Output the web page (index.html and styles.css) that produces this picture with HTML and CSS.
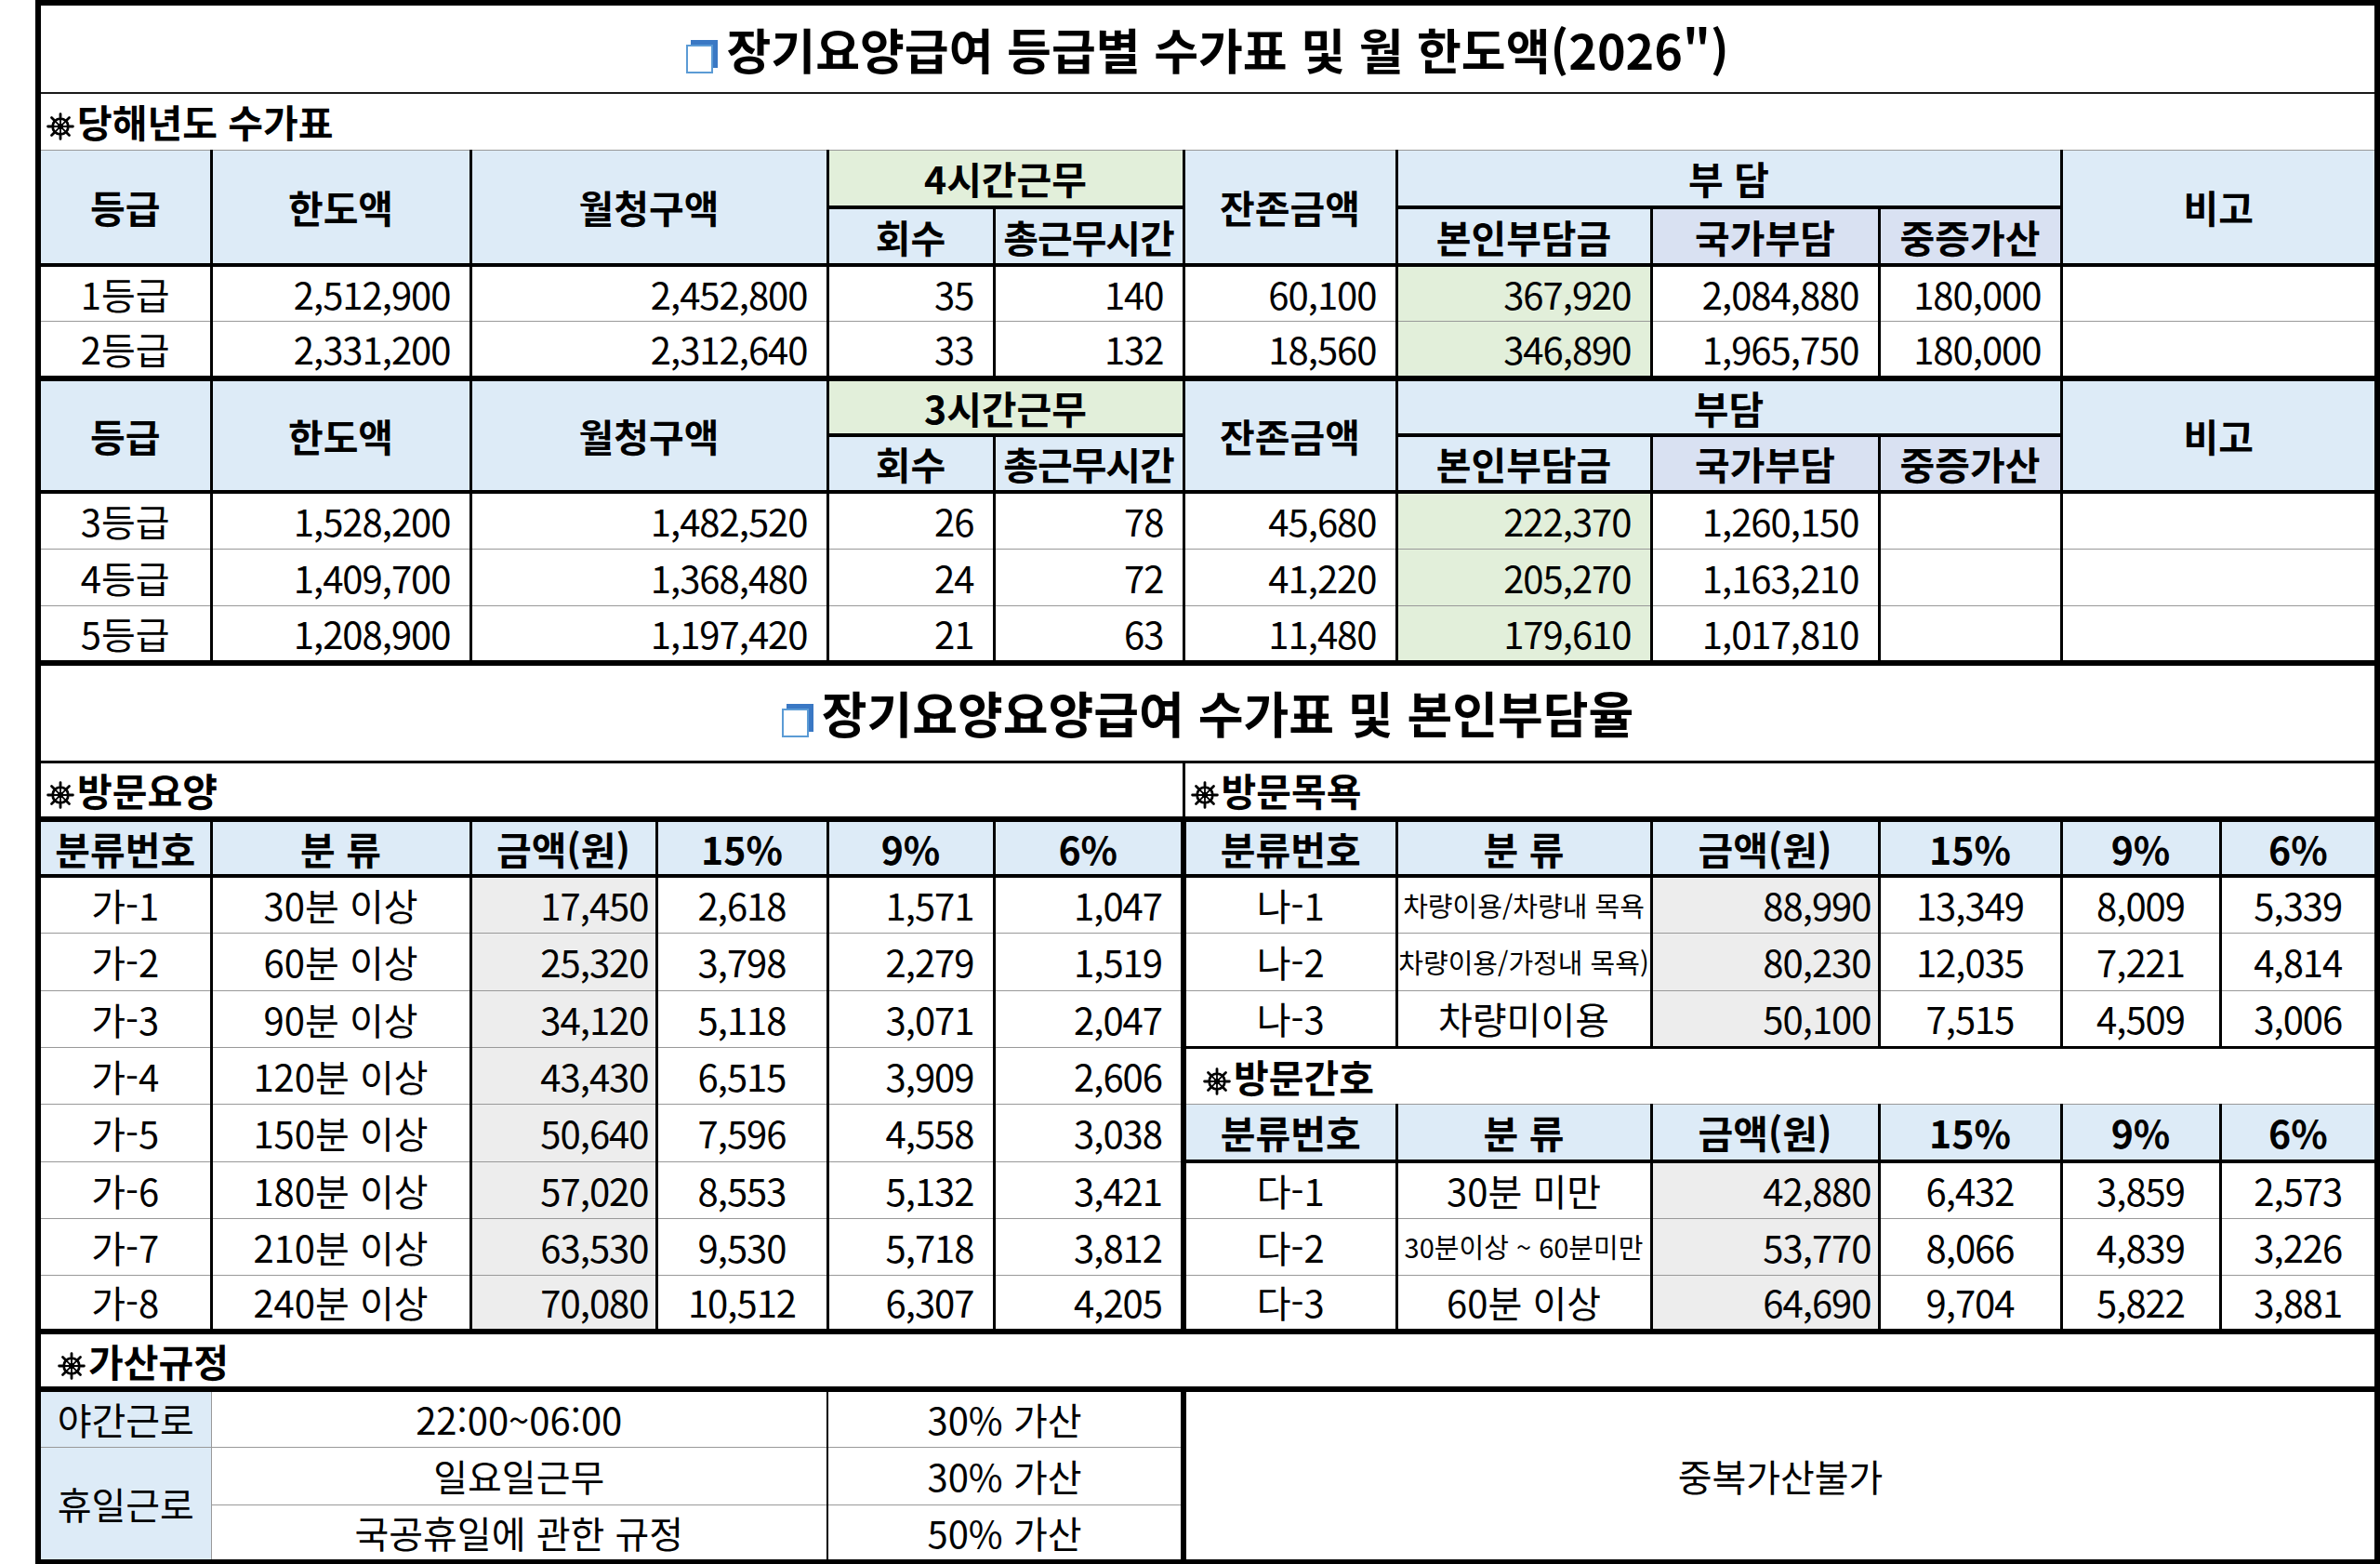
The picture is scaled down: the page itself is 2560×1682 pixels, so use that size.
FILE: index.html
```html
<!DOCTYPE html>
<html lang="ko">
<head>
<meta charset="utf-8">
<title>장기요양급여 수가표</title>
<link rel="stylesheet" href="styles.css">
</head>
<body>
<table class="sheet">
<colgroup>
<col class="w-a"><col class="w-b"><col class="w-c1"><col class="w-c2"><col class="w-d"><col class="w-e"><col class="w-f"><col class="w-g"><col class="w-h"><col class="w-i"><col class="w-j1"><col class="w-j2">
</colgroup>
<tbody>
<tr class="row-title">
<td colspan="12" class="title"><svg class="ticon" viewBox="0 0 34 36"><rect x="5" y="0" width="29" height="30" fill="#3A78C4"/><rect x="1" y="6" width="27" height="29" fill="#fff" stroke="#5B9BD5" stroke-width="2"/></svg>장기요양급여 등급별 수가표 및 월 한도액(2026")</td>
</tr>
<tr class="row-61">
<td colspan="12" class="sec"><svg class="wheel" viewBox="0 0 30 30"><g stroke="#000" fill="none"><circle cx="15" cy="15" r="8.4" stroke-width="2.8"/><path d="M15 4V26M4 15H26M7.2 7.2L22.8 22.8M22.8 7.2L7.2 22.8" stroke-width="1.8"/><path d="M15 1.6V5M15 25V28.4M1.6 15H5M25 15H28.4M5.5 5.5L8 8M22 22L24.5 24.5M24.5 5.5L22 8M8 22L5.5 24.5" stroke-width="2.8" stroke-linecap="round"/></g><circle cx="15" cy="15" r="3.2"/></svg>당해년도 수가표</td>
</tr>
<tr class="row-62">
<td rowspan="2" class="hd">등급</td>
<td rowspan="2" class="hd">한도액</td>
<td rowspan="2" colspan="2" class="hd">월청구액</td>
<td colspan="2" class="hd green">4시간근무</td>
<td rowspan="2" class="hd">잔존금액</td>
<td colspan="3" class="hd">부 담</td>
<td rowspan="2" colspan="2" class="hd">비고</td>
</tr>
<tr class="row-62">
<td class="hd">회수</td>
<td class="hd tight">총근무시간</td>
<td class="hd">본인부담금</td>
<td class="hd lav">국가부담</td>
<td class="hd lav">중증가산</td>
</tr>
<tr class="row-60">
<td class="c">1등급</td><td class="n">2,512,900</td><td colspan="2" class="n">2,452,800</td><td class="n">35</td><td class="n">140</td><td class="n">60,100</td><td class="n green">367,920</td><td class="n">2,084,880</td><td class="n">180,000</td><td colspan="2"></td>
</tr>
<tr class="row-62 tb">
<td class="c">2등급</td><td class="n">2,331,200</td><td colspan="2" class="n">2,312,640</td><td class="n">33</td><td class="n">132</td><td class="n">18,560</td><td class="n green">346,890</td><td class="n">1,965,750</td><td class="n">180,000</td><td colspan="2"></td>
</tr>
<tr class="row-61">
<td rowspan="2" class="hd">등급</td>
<td rowspan="2" class="hd">한도액</td>
<td rowspan="2" colspan="2" class="hd">월청구액</td>
<td colspan="2" class="hd green">3시간근무</td>
<td rowspan="2" class="hd">잔존금액</td>
<td colspan="3" class="hd">부담</td>
<td rowspan="2" colspan="2" class="hd">비고</td>
</tr>
<tr class="row-61">
<td class="hd">회수</td>
<td class="hd tight">총근무시간</td>
<td class="hd">본인부담금</td>
<td class="hd lav">국가부담</td>
<td class="hd lav">중증가산</td>
</tr>
<tr class="row-61">
<td class="c">3등급</td><td class="n">1,528,200</td><td colspan="2" class="n">1,482,520</td><td class="n">26</td><td class="n">78</td><td class="n">45,680</td><td class="n green">222,370</td><td class="n">1,260,150</td><td class="n"></td><td colspan="2"></td>
</tr>
<tr class="row-61">
<td class="c">4등급</td><td class="n">1,409,700</td><td colspan="2" class="n">1,368,480</td><td class="n">24</td><td class="n">72</td><td class="n">41,220</td><td class="n green">205,270</td><td class="n">1,163,210</td><td class="n"></td><td colspan="2"></td>
</tr>
<tr class="row-62 tb">
<td class="c">5등급</td><td class="n">1,208,900</td><td colspan="2" class="n">1,197,420</td><td class="n">21</td><td class="n">63</td><td class="n">11,480</td><td class="n green">179,610</td><td class="n">1,017,810</td><td class="n"></td><td colspan="2"></td>
</tr>
<tr class="row-title2">
<td colspan="12" class="title title2"><svg class="ticon" viewBox="0 0 34 36"><rect x="5" y="0" width="29" height="30" fill="#3A78C4"/><rect x="1" y="6" width="27" height="29" fill="#fff" stroke="#5B9BD5" stroke-width="2"/></svg>장기요양요양급여 수가표 및 본인부담율</td>
</tr>
<tr class="row-62 tb">
<td colspan="6" class="sec"><svg class="wheel" viewBox="0 0 30 30"><g stroke="#000" fill="none"><circle cx="15" cy="15" r="8.4" stroke-width="2.8"/><path d="M15 4V26M4 15H26M7.2 7.2L22.8 22.8M22.8 7.2L7.2 22.8" stroke-width="1.8"/><path d="M15 1.6V5M15 25V28.4M1.6 15H5M25 15H28.4M5.5 5.5L8 8M22 22L24.5 24.5M24.5 5.5L22 8M8 22L5.5 24.5" stroke-width="2.8" stroke-linecap="round"/></g><circle cx="15" cy="15" r="3.2"/></svg>방문요양</td>
<td colspan="6" class="sec"><svg class="wheel" viewBox="0 0 30 30"><g stroke="#000" fill="none"><circle cx="15" cy="15" r="8.4" stroke-width="2.8"/><path d="M15 4V26M4 15H26M7.2 7.2L22.8 22.8M22.8 7.2L7.2 22.8" stroke-width="1.8"/><path d="M15 1.6V5M15 25V28.4M1.6 15H5M25 15H28.4M5.5 5.5L8 8M22 22L24.5 24.5M24.5 5.5L22 8M8 22L5.5 24.5" stroke-width="2.8" stroke-linecap="round"/></g><circle cx="15" cy="15" r="3.2"/></svg>방문목욕</td>
</tr>
<tr class="row-61">
<td class="hd">분류번호</td><td class="hd">분 류</td><td class="hd">금액(원)</td><td class="hd">15%</td><td class="hd">9%</td><td class="hd mid-r">6%</td>
<td class="hd mid-l">분류번호</td><td class="hd">분 류</td><td class="hd">금액(원)</td><td class="hd">15%</td><td class="hd">9%</td><td class="hd">6%</td>
</tr>
<tr class="row-61">
<td class="c">가-1</td><td class="c">30분 이상</td><td class="amt">17,450</td><td class="c num">2,618</td><td class="n">1,571</td><td class="n mid-r">1,047</td>
<td class="c mid-l">나-1</td><td class="c small">차량이용/차량내 목욕</td><td class="amt">88,990</td><td class="c num">13,349</td><td class="c num">8,009</td><td class="c num">5,339</td>
</tr>
<tr class="row-62">
<td class="c">가-2</td><td class="c">60분 이상</td><td class="amt">25,320</td><td class="c num">3,798</td><td class="n">2,279</td><td class="n mid-r">1,519</td>
<td class="c mid-l">나-2</td><td class="c small">차량이용/가정내 목욕)</td><td class="amt">80,230</td><td class="c num">12,035</td><td class="c num">7,221</td><td class="c num">4,814</td>
</tr>
<tr class="row-61">
<td class="c">가-3</td><td class="c">90분 이상</td><td class="amt">34,120</td><td class="c num">5,118</td><td class="n">3,071</td><td class="n mid-r">2,047</td>
<td class="c mid-l bk">나-3</td><td class="c bk">차량미이용</td><td class="amt bk">50,100</td><td class="c num bk">7,515</td><td class="c num bk">4,509</td><td class="c num bk">3,006</td>
</tr>
<tr class="row-61">
<td class="c">가-4</td><td class="c">120분 이상</td><td class="amt">43,430</td><td class="c num">6,515</td><td class="n">3,909</td><td class="n mid-r">2,606</td>
<td colspan="6" class="sec mid-l indent"><svg class="wheel" viewBox="0 0 30 30"><g stroke="#000" fill="none"><circle cx="15" cy="15" r="8.4" stroke-width="2.8"/><path d="M15 4V26M4 15H26M7.2 7.2L22.8 22.8M22.8 7.2L7.2 22.8" stroke-width="1.8"/><path d="M15 1.6V5M15 25V28.4M1.6 15H5M25 15H28.4M5.5 5.5L8 8M22 22L24.5 24.5M24.5 5.5L22 8M8 22L5.5 24.5" stroke-width="2.8" stroke-linecap="round"/></g><circle cx="15" cy="15" r="3.2"/></svg>방문간호</td>
</tr>
<tr class="row-62">
<td class="c">가-5</td><td class="c">150분 이상</td><td class="amt">50,640</td><td class="c num">7,596</td><td class="n">4,558</td><td class="n mid-r">3,038</td>
<td class="hd mid-l">분류번호</td><td class="hd">분 류</td><td class="hd">금액(원)</td><td class="hd">15%</td><td class="hd">9%</td><td class="hd">6%</td>
</tr>
<tr class="row-61">
<td class="c">가-6</td><td class="c">180분 이상</td><td class="amt">57,020</td><td class="c num">8,553</td><td class="n">5,132</td><td class="n mid-r">3,421</td>
<td class="c mid-l">다-1</td><td class="c">30분 미만</td><td class="amt">42,880</td><td class="c num">6,432</td><td class="c num">3,859</td><td class="c num">2,573</td>
</tr>
<tr class="row-61">
<td class="c">가-7</td><td class="c">210분 이상</td><td class="amt">63,530</td><td class="c num">9,530</td><td class="n">5,718</td><td class="n mid-r">3,812</td>
<td class="c mid-l">다-2</td><td class="c small">30분이상 ~ 60분미만</td><td class="amt">53,770</td><td class="c num">8,066</td><td class="c num">4,839</td><td class="c num">3,226</td>
</tr>
<tr class="row-61 tb">
<td class="c">가-8</td><td class="c">240분 이상</td><td class="amt">70,080</td><td class="c num">10,512</td><td class="n">6,307</td><td class="n mid-r">4,205</td>
<td class="c mid-l">다-3</td><td class="c">60분 이상</td><td class="amt">64,690</td><td class="c num">9,704</td><td class="c num">5,822</td><td class="c num">3,881</td>
</tr>
<tr class="row-62 tb">
<td colspan="12" class="sec indent"><svg class="wheel" viewBox="0 0 30 30"><g stroke="#000" fill="none"><circle cx="15" cy="15" r="8.4" stroke-width="2.8"/><path d="M15 4V26M4 15H26M7.2 7.2L22.8 22.8M22.8 7.2L7.2 22.8" stroke-width="1.8"/><path d="M15 1.6V5M15 25V28.4M1.6 15H5M25 15H28.4M5.5 5.5L8 8M22 22L24.5 24.5M24.5 5.5L22 8M8 22L5.5 24.5" stroke-width="2.8" stroke-linecap="round"/></g><circle cx="15" cy="15" r="3.2"/></svg>가산규정</td>
</tr>
<tr class="row-62">
<td class="c blue gr">야간근로</td><td colspan="3" class="c gl br2">22:00~06:00</td><td colspan="2" class="c bl2 mid-r">30% 가산</td>
<td colspan="6" rowspan="3" class="c mid-l">중복가산불가</td>
</tr>
<tr class="row-62">
<td rowspan="2" class="c blue gr">휴일근로</td><td colspan="3" class="c gl br2">일요일근무</td><td colspan="2" class="c bl2 mid-r">30% 가산</td>
</tr>
<tr class="row-62">
<td colspan="3" class="c gl br2">국공휴일에 관한 규정</td><td colspan="2" class="c bl2 mid-r">50% 가산</td>
</tr>
</tbody>
</table>
</body>
</html>
```

FILE: styles.css
```css
html, body {
  margin: 0;
  padding: 0;
  background: #fff;
}

body {
  font-family: "Noto Sans CJK KR", "Noto Sans", sans-serif;
  color: #000;
}

.sheet {
  border-collapse: collapse;
  table-layout: fixed;
  width: 2521px;
  margin: 0 0 0 38px;
  border: 6px solid #000;
}

.w-a { width: 186px; }
.w-b { width: 279px; }
.w-c1 { width: 200px; }
.w-c2 { width: 184px; }
.w-d { width: 179px; }
.w-e { width: 204px; }
.w-f { width: 229px; }
.w-g { width: 274px; }
.w-h { width: 245px; }
.w-i { width: 196px; }
.w-j1 { width: 171px; }
.w-j2 { width: 169px; }

.row-title { height: 97px; }
.row-title2 { height: 106px; }
.row-60 { height: 60px; }
.row-61 { height: 61px; }
.row-62 { height: 62px; }

.sheet td {
  border-left: 3px solid #000;
  border-right: 3px solid #000;
  border-top: 1px solid #999;
  border-bottom: 1px solid #999;
  padding: 0;
  font-size: 40px;
  font-weight: 400;
  line-height: 1;
  vertical-align: middle;
  white-space: nowrap;
  overflow: hidden;
}

.sheet .title {
  text-align: center;
  font-size: 52px;
  font-weight: 700;
  border-bottom: 2px solid #1a1a1a;
}

.sheet .title2 {
  font-size: 53px;
  border-bottom: 3px solid #000;
}

.ticon {
  width: 34px;
  height: 36px;
  margin-right: 9px;
  vertical-align: -4px;
}

.sheet .sec {
  font-size: 41px;
  font-weight: 700;
  padding-left: 6px;
  text-align: left;
}

.sheet .sec.indent {
  padding-left: 18px;
}

.wheel {
  width: 30px;
  height: 30px;
  margin-right: 3px;
  vertical-align: -3px;
}

.sheet .hd {
  background: #DDEBF7;
  font-size: 41px;
  font-weight: 700;
  text-align: center;
  border-bottom: 4px solid #000;
}

.sheet .tight {
  letter-spacing: -1px;
}

.sheet .green {
  background: #E2EFDA;
}

.sheet .lav {
  background: #D9E1F2;
}

.sheet .blue {
  background: #DDEBF7;
}

.sheet .c {
  text-align: center;
}

.sheet .num,
.sheet .n,
.sheet .amt {
  letter-spacing: -1px;
}

.sheet .n {
  text-align: right;
  padding-right: 20px;
}

.sheet .amt {
  text-align: right;
  padding-right: 7px;
  background: #EDEDED;
}

.sheet .small {
  font-size: 29px;
}

.sheet .tb td {
  border-bottom: 6px solid #000;
}

.sheet .mid-r {
  border-right: 6px solid #000;
}

.sheet .mid-l {
  border-left: 6px solid #000;
}

.sheet .bk {
  border-bottom: 3px solid #000;
}

.sheet .gr {
  border-right: 1px solid #999;
}

.sheet .gl {
  border-left: 1px solid #999;
}

.sheet .br2 {
  border-right: 2px solid #000;
}

.sheet .bl2 {
  border-left: 2px solid #000;
}
```
